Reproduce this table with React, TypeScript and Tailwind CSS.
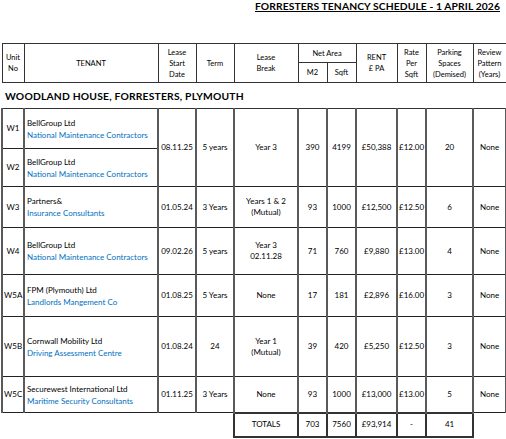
import React from "react";

type Row = {
  unit: string;
  name: string;
  desc: string;
  h: string;
  date?: string;
  term?: string;
  brk?: React.ReactNode;
  m2?: string;
  sqft?: string;
  rent?: string;
  rate?: string;
  park?: string;
  review?: string;
  span?: number;
  skip?: boolean;
};

const rows: Row[] = [
  { unit: "W1", name: "BellGroup Ltd", desc: "National Maintenance Contractors", h: "h-[40px]", date: "08.11.25", term: "5 years", brk: "Year 3", m2: "390", sqft: "4199", rent: "£50,388", rate: "£12.00", park: "20", review: "None", span: 2 },
  { unit: "W2", name: "BellGroup Ltd", desc: "National Maintenance Contractors", h: "h-[38px]", skip: true },
  { unit: "W3", name: "Partners&", desc: "Insurance Consultants", h: "h-[41px]", date: "01.05.24", term: "3 Years", brk: (<>Years 1 &amp; 2<br />(Mutual)</>), m2: "93", sqft: "1000", rent: "£12,500", rate: "£12.50", park: "6", review: "None" },
  { unit: "W4", name: "BellGroup Ltd", desc: "National Maintenance Contractors", h: "h-[47px]", date: "09.02.26", term: "5 years", brk: (<>Year 3<br />02.11.28</>), m2: "71", sqft: "760", rent: "£9,880", rate: "£13.00", park: "4", review: "None" },
  { unit: "W5A", name: "FPM (Plymouth) Ltd", desc: "Landlords Mangement Co", h: "h-[42px]", date: "01.08.25", term: "5 Years", brk: "None", m2: "17", sqft: "181", rent: "£2,896", rate: "£16.00", park: "3", review: "None" },
  { unit: "W5B", name: "Cornwall Mobility Ltd", desc: "Driving Assessment Centre", h: "h-[60px]", date: "01.08.24", term: "24", brk: (<>Year 1<br />(Mutual)</>), m2: "39", sqft: "420", rent: "£5,250", rate: "£12.50", park: "3", review: "None" },
  { unit: "W5C", name: "Securewest International Ltd", desc: "Maritime Security Consultants", h: "h-[36px]", date: "01.11.25", term: "3 Years", brk: "None", m2: "93", sqft: "1000", rent: "£13,000", rate: "£13.00", park: "5", review: "None" },
];

const hd = "border border-[#333] text-center align-middle px-[1px] leading-[11px]";
const bd = "border-y border-y-[#222] border-x-2 border-x-[#5a5a5a] text-center align-middle px-[1px] leading-[11px]";
const tc = "border-2 border-[#333] text-center align-middle leading-[11px]";

export default function App() {
  return (
    <div className="w-[506px] h-[439px] bg-white text-black overflow-hidden" style={{ fontFamily: "Lato, 'Open Sans', sans-serif" }}>
      <div className="h-[43px] flex justify-end pr-[6px] pt-[1px]">
        <span className="text-[10.3px] font-bold underline leading-[11px] tracking-[0.1px]">FORRESTERS TENANCY SCHEDULE - 1 APRIL 2026</span>
      </div>
      <table className="table-fixed border-collapse w-[505px] text-[7.5px] ml-[1px]">
        <colgroup>
          <col className="w-[22px]" />
          <col className="w-[134px]" />
          <col className="w-[38px]" />
          <col className="w-[38px]" />
          <col className="w-[64px]" />
          <col className="w-[29px]" />
          <col className="w-[29px]" />
          <col className="w-[41px]" />
          <col className="w-[29px]" />
          <col className="w-[47px]" />
          <col className="w-[33px]" />
        </colgroup>
        <tbody>
          <tr className="h-[19px]">
            <td rowSpan={2} className={hd}>Unit<br />No</td>
            <td rowSpan={2} className={hd}>TENANT</td>
            <td rowSpan={2} className={hd}>Lease<br />Start<br />Date</td>
            <td rowSpan={2} className={hd}>Term</td>
            <td rowSpan={2} className={hd}>Lease<br />Break</td>
            <td colSpan={2} className={hd}>Net Area</td>
            <td rowSpan={2} className={hd}>RENT<br />£ PA</td>
            <td rowSpan={2} className={hd}>Rate<br />Per<br />Sqft</td>
            <td rowSpan={2} className={hd}>Parking<br />Spaces<br />(Demised)</td>
            <td rowSpan={2} className={hd}>Review<br />Pattern<br />(Years)</td>
          </tr>
          <tr className="h-[20px]">
            <td className={hd}>M2</td>
            <td className={hd}>Sqft</td>
          </tr>
          <tr className="h-[26px]">
            <td colSpan={11} className="border-y border-y-[#333] border-x-0 px-[3px] align-middle pt-[2px]">
              <span className="text-[10.3px] font-bold leading-[14px] tracking-[0.2px]">WOODLAND HOUSE, FORRESTERS, PLYMOUTH</span>
            </td>
          </tr>
          {rows.map((r) => (
            <tr key={r.unit} className={r.h + " text-[8px]"}>
              <td className={bd}>{r.unit}</td>
              <td className={bd + " text-left pl-[2px]"}>
                <div className="leading-[12px]">{r.name}</div>
                <div className="leading-[12px] text-[#0070c0]">{r.desc}</div>
              </td>
              {!r.skip && (
                <>
                  <td rowSpan={r.span} className={bd}>{r.date}</td>
                  <td rowSpan={r.span} className={bd}>{r.term}</td>
                  <td rowSpan={r.span} className={bd}>{r.brk}</td>
                  <td rowSpan={r.span} className={bd}>{r.m2}</td>
                  <td rowSpan={r.span} className={bd}>{r.sqft}</td>
                  <td rowSpan={r.span} className={bd}>{r.rent}</td>
                  <td rowSpan={r.span} className={bd}>{r.rate}</td>
                  <td rowSpan={r.span} className={bd}>{r.park}</td>
                  <td rowSpan={r.span} className={bd}>{r.review}</td>
                </>
              )}
            </tr>
          ))}
          <tr className="h-[24px] text-[8px]">
            <td colSpan={4} className="border-0"></td>
            <td className={tc}>TOTALS</td>
            <td className={tc}>703</td>
            <td className={tc}>7560</td>
            <td className={tc}>£93,914</td>
            <td className={tc}>-</td>
            <td className={tc}>41</td>
            <td className="border-0"></td>
          </tr>
        </tbody>
      </table>
    </div>
  );
}
